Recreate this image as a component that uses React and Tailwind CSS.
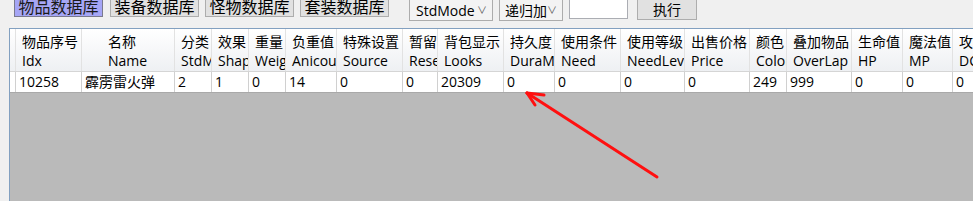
import React from 'react'

const columns = [
    { cn: '物品序号', en: 'Idx', w: 'w-[66px]', v: '10258' },
    { cn: '名称', en: 'Name', w: 'w-[93px]', v: '霹雳雷火弹', pad: 'pl-[26px]' },
    { cn: '分类', en: 'StdMode', w: 'w-[37px]', v: '2' },
    { cn: '效果', en: 'Shape', w: 'w-[37px]', v: '1' },
    { cn: '重量', en: 'Weight', w: 'w-[37px]', v: '0' },
    { cn: '负重值', en: 'Anicount', w: 'w-[51px]', v: '14' },
    { cn: '特殊设置', en: 'Source', w: 'w-[66px]', v: '0' },
    { cn: '暂留', en: 'Reserved', w: 'w-[35px]', v: '0' },
    { cn: '背包显示', en: 'Looks', w: 'w-[66px]', v: '20309' },
    { cn: '持久度', en: 'DuraMax', w: 'w-[51px]', v: '0' },
    { cn: '使用条件', en: 'Need', w: 'w-[66px]', v: '0' },
    { cn: '使用等级', en: 'NeedLevel', w: 'w-[64px]', v: '0' },
    { cn: '出售价格', en: 'Price', w: 'w-[65px]', v: '0' },
    { cn: '颜色', en: 'Color', w: 'w-[37px]', v: '249' },
    { cn: '叠加物品', en: 'OverLap', w: 'w-[65px]', v: '999' },
    { cn: '生命值', en: 'HP', w: 'w-[51px]', v: '0' },
    { cn: '魔法值', en: 'MP', w: 'w-[50px]', v: '0' },
    { cn: '攻击力', en: 'DC', w: 'w-[60px]', v: '0' },
]

const font = "font-['Open_Sans','Noto_Sans_CJK_SC',sans-serif]"

export default function App() {
    return (
        <div className={`relative w-[973px] h-[201px] overflow-hidden bg-[#f0f0f0] ${font} text-black`}>
            {/* top toolbar */}
            <div className="flex items-start h-[28px] pl-[14px]">
                <button className="-mt-[4px] w-[89px] h-[21px] bg-[#a6a6f6] border border-[#7a7a8e] text-[16px] leading-[18px] text-[#1a1a1a]">
                    物品数据库
                </button>
                <button className="-mt-[4px] ml-[7px] w-[89px] h-[21px] bg-[#e1e1e1] border border-[#adadad] text-[16px] leading-[18px]">
                    装备数据库
                </button>
                <button className="-mt-[4px] ml-[6px] w-[89px] h-[21px] bg-[#e1e1e1] border border-[#adadad] text-[16px] leading-[18px]">
                    怪物数据库
                </button>
                <button className="-mt-[4px] ml-[6px] w-[89px] h-[21px] bg-[#e1e1e1] border border-[#adadad] text-[16px] leading-[18px]">
                    套装数据库
                </button>
                <div className="-mt-[1px] ml-[20px] w-[84px] h-[22px] bg-[#f3f3f3] border border-[#acacac] flex items-center pl-[6px] pr-[5px] text-[14px]">
                    <span className="flex-1">StdMode</span>
                    <span className="text-[10px] text-[#606060]">∨</span>
                </div>
                <div className="-mt-[1px] ml-[6px] w-[64px] h-[22px] bg-[#f3f3f3] border border-[#acacac] flex items-center pl-[5px] pr-[5px] text-[14px]">
                    <span className="flex-1">递归加</span>
                    <span className="text-[10px] text-[#606060]">∨</span>
                </div>
                <div className="-mt-[1px] ml-[6px] w-[59px] h-[20px] bg-white border border-[#abadb3]"></div>
                <button className="-mt-[3px] ml-[9px] w-[60px] h-[23px] bg-[#e1e1e1] border border-[#adadad] text-[14px] leading-[20px] pt-[2px]">
                    执行
                </button>
            </div>

            {/* data grid */}
            <div className="ml-[9px] h-[173px] border-l border-t border-[#82a0c0] bg-[#bababa] overflow-hidden">
                <div className="flex bg-gradient-to-b from-white to-[#eef0f3] border-b border-[#d5d5d5] h-[43px]">
                    <div className="w-[6px] shrink-0 border-r border-[#e2e2e2]"></div>
                    {columns.map((c) => (
                        <div
                            key={c.en}
                            className={`${c.w} shrink-0 overflow-hidden whitespace-nowrap border-r border-[#e2e2e2] ${c.pad || 'pl-[6px]'} pt-[3px] text-[14px] leading-[19px]`}
                        >
                            <div>{c.cn}</div>
                            <div>{c.en}</div>
                        </div>
                    ))}
                </div>
                <div className="flex bg-white border-b border-[#a9a9a9] h-[21px]">
                    <div className="w-[6px] shrink-0 border-r border-[#d0d0d0]"></div>
                    {columns.map((c) => (
                        <div
                            key={c.en}
                            className={`${c.w} shrink-0 overflow-hidden whitespace-nowrap border-r border-[#d0d0d0] pl-[3px] text-[14px] leading-[20px]`}
                        >
                            {c.v}
                        </div>
                    ))}
                </div>
            </div>

            {/* red annotation arrow */}
            <svg className="absolute left-0 top-0 pointer-events-none" width="973" height="201">
                <g stroke="#ff1010" strokeWidth="3" strokeLinecap="round" fill="none">
                    <line x1="657" y1="177" x2="527" y2="93" />
                    <line x1="527" y1="93" x2="544" y2="95" />
                    <line x1="527" y1="93" x2="535" y2="105" />
                </g>
            </svg>
        </div>
    )
}
